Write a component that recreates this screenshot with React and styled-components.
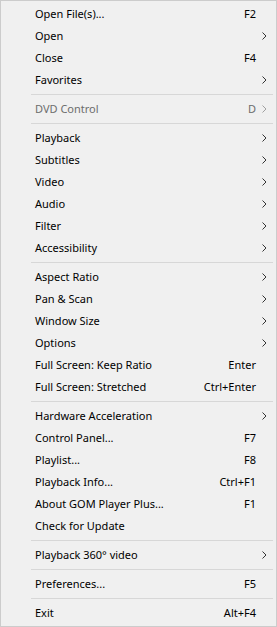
import React from 'react';
import styled, { createGlobalStyle } from 'styled-components';

const GlobalStyle = createGlobalStyle`
  html, body {
    margin: 0;
    padding: 0;
    background: #f0f0f0;
  }
  body {
    font-family: 'Segoe UI', 'Noto Sans', 'Liberation Sans', sans-serif;
    font-size: 11px;
  }
`;

const menu = [
  [
    { label: 'Open File(s)...', key: 'F2' },
    { label: 'Open', sub: true },
    { label: 'Close', key: 'F4' },
    { label: 'Favorites', sub: true },
  ],
  [{ label: 'DVD Control', key: 'D', sub: true, disabled: true }],
  [
    { label: 'Playback', sub: true },
    { label: 'Subtitles', sub: true },
    { label: 'Video', sub: true },
    { label: 'Audio', sub: true },
    { label: 'Filter', sub: true },
    { label: 'Accessibility', sub: true },
  ],
  [
    { label: 'Aspect Ratio', sub: true },
    { label: 'Pan & Scan', sub: true },
    { label: 'Window Size', sub: true },
    { label: 'Options', sub: true },
    { label: 'Full Screen: Keep Ratio', key: 'Enter' },
    { label: 'Full Screen: Stretched', key: 'Ctrl+Enter' },
  ],
  [
    { label: 'Hardware Acceleration', sub: true },
    { label: 'Control Panel...', key: 'F7' },
    { label: 'Playlist...', key: 'F8' },
    { label: 'Playback Info...', key: 'Ctrl+F1' },
    { label: 'About GOM Player Plus...', key: 'F1' },
    { label: 'Check for Update' },
  ],
  [{ label: 'Playback 360° video', sub: true }],
  [{ label: 'Preferences...', key: 'F5' }],
  [{ label: 'Exit', key: 'Alt+F4' }],
];

const Chevron = ({ color }) => (
  <svg width="5" height="8" viewBox="0 0 5 8">
    <polyline points="0.5,0.5 4,4 0.5,7.5" fill="none" stroke={color} strokeWidth="1" />
  </svg>
);

const App = () => (
  <>
    <GlobalStyle />
    <Menu>
      {menu.map((group, gi) => (
        <React.Fragment key={gi}>
          {gi > 0 && <Separator />}
          {group.map(item => (
            <Item key={item.label} $disabled={item.disabled}>
              <Label>{item.label}</Label>
              <Shortcut>{item.key}</Shortcut>
              <Arrow>{item.sub && <Chevron color={item.disabled ? '#a0a0a0' : '#333'} />}</Arrow>
            </Item>
          ))}
        </React.Fragment>
      ))}
    </Menu>
  </>
);

const Menu = styled.div`
  box-sizing: border-box;
  width: 277px;
  height: 627px;
  padding: 2px;
  background: #f0f0f0;
  border: 1px solid #cccccc;
  display: flex;
  flex-direction: column;
`;

const Item = styled.div`
  display: grid;
  grid-template-columns: 1fr auto 18px;
  align-items: center;
  height: 22px;
  padding-left: 32px;
  color: ${p => (p.$disabled ? '#6d6d6d' : '#000')};
  white-space: nowrap;
`;

const Label = styled.span`
  line-height: 22px;
`;

const Shortcut = styled.span`
  line-height: 22px;
  text-align: right;
`;

const Arrow = styled.span`
  display: flex;
  align-items: center;
  padding-left: 6px;
  height: 22px;
`;

const Separator = styled.div`
  height: 1px;
  margin: 3px 1px 3px 28px;
  background: #d7d7d7;
`;

export default App;
